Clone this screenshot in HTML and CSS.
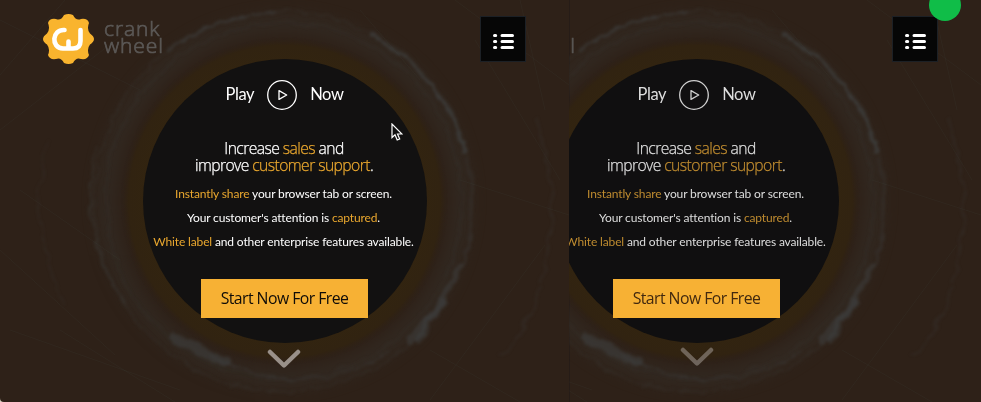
FILE: index.html
```
<!DOCTYPE html>
<html lang="en">
<head>
<meta charset="utf-8">
<title>CrankWheel</title>
<link rel="stylesheet" href="styles.css">
</head>
<body>
<svg class="defs" aria-hidden="true">
  <defs>
    <filter id="chalk" x="-20%" y="-20%" width="140%" height="140%" color-interpolation-filters="sRGB">
      <feTurbulence type="fractalNoise" baseFrequency="0.06" numOctaves="5" seed="11" result="n"/>
      <feDisplacementMap in="SourceGraphic" in2="n" scale="10" xChannelSelector="R" yChannelSelector="G" result="d"/>
      <feGaussianBlur in="d" stdDeviation="1.5"/>
    </filter>
    <filter id="soft" x="-20%" y="-20%" width="140%" height="140%" color-interpolation-filters="sRGB"><feGaussianBlur stdDeviation="7"/></filter>
    <radialGradient id="halo">
      <stop offset="0.84" stop-color="#322410"/>
      <stop offset="0.95" stop-color="#312311"/>
      <stop offset="1" stop-color="#2e2118" stop-opacity="0"/>
    </radialGradient>
    <symbol id="backdrop" viewBox="0 0 569 402">
      <circle cx="284" cy="201" r="178" fill="none" stroke="#332b24" stroke-width="20" opacity=".7" filter="url(#soft)"/>
      <g filter="url(#chalk)" fill="none" stroke="#43484a" stroke-linecap="round">
        <circle cx="284" cy="201" r="190" stroke-width="1.500" opacity=".22"/>
        <circle cx="284" cy="201" r="178" stroke-width="2" opacity=".12"/>
        <path d="M168 52A190 190 0 0 1 275 12" stroke-width="2.500" opacity=".45"/>
        <path d="M370 35A188 188 0 0 1 466 152" stroke-width="3" opacity=".6"/>
        <path d="M466 158A187 187 0 0 1 462 266" stroke-width="3" opacity=".2"/>
        <path d="M459 266A190 190 0 0 1 408 341" stroke-width="6" opacity=".4"/>
        <path d="M443 303L418 338" stroke-width="6" opacity=".35"/>
        <path d="M174 336A178 178 0 0 0 226 361" stroke-width="9" opacity=".45"/>
        <path d="M211 355A165 165 0 0 0 390 350" stroke-width="1.500" opacity=".35"/>
        <path d="M96 147A191 191 0 0 0 124 302" stroke-width="2" opacity=".3"/>
        <path d="M536 120Q565 200 541 280M541 285Q530 330 500 355" stroke-width="2" opacity=".2"/>
        <path d="M46 140Q27 230 64 303" stroke-width="1.500" opacity=".2"/>
      </g>
      <g stroke="#444746" stroke-width=".6" opacity=".25">
        <path d="M0 75L65 0M0 130L135 25M10 330L180 390M0 250L115 355M455 0L569 85M475 40L560 180M460 180L569 215M430 350L520 402M360 10L420 80M520 0L545 110M60 330L175 402M20 190L120 260M430 400L545 245M0 20L140 90" fill="none"/>
      </g>
      <circle cx="284.5" cy="201" r="164" fill="url(#halo)"/>
    </symbol>
    <symbol id="gear" viewBox="0 0 51 50">
      <path fill="#f9b42e" d="M21 1Q25.500-1 30 1Q33 7 38 5Q44.500 4 46 9Q43.500 15 47 19.500Q55 25 47 30.500Q43.500 35 46 41Q44.500 46 38 45Q33 43 30 49Q25.500 51 21 49Q18 43 13 45Q6.500 46 5 41Q7.500 35 4 30.500Q-4 25 4 19.500Q7.500 15 5 9Q6.500 4 13 5Q18 7 21 1Z"/>
      <path fill="none" stroke="#fff" stroke-width="4.600" stroke-linecap="round" stroke-linejoin="round" d="M21.500 16C9 15 7.500 34 20 34.500H30Q37.500 34.500 37.500 27V16M25.500 27.500V34"/>
    </symbol>
    <symbol id="list" viewBox="0 0 21 15">
      <path stroke="#fff" stroke-width="3" stroke-linecap="round" d="M1.500 1.500h1.200M9 1.500h10.500M1.500 7.500h1.200M9 7.500h10.500M1.500 13.500h1.200M9 13.500h10.500"/>
    </symbol>
    <symbol id="play" viewBox="0 0 30 30">
      <circle cx="15" cy="15" r="14.300" fill="none" stroke="#fff" stroke-width="1.300"/>
      <path d="M12 10.600V19.400L19.700 15Z" fill="none" stroke="#fff" stroke-width="1.300" stroke-linejoin="round"/>
    </symbol>
    <symbol id="chevron" viewBox="0 0 34 20">
      <path d="M3 3L17 16.500L31 3" fill="none" stroke="#999089" stroke-width="4.500" stroke-linecap="round" stroke-linejoin="round"/>
    </symbol>
  </defs>
</svg>
<main class="screens">
  <section class="screen presenter">
    <div class="page">
      <svg class="backdrop"><use href="#backdrop"/></svg>
      <header class="top">
        <div class="brand"><svg class="gear"><use href="#gear"/></svg><div class="name">crank<br>wheel</div></div>
        <div class="menu"><svg class="list"><use href="#list"/></svg></div>
      </header>
      <div class="disc">
        <div class="play-row"><span class="play-word">Play</span><svg class="play"><use href="#play"/></svg><span class="play-word">Now</span></div>
        <h1 class="headline"><span>Increase <em>sales</em> and</span><span>improve <em>customer support</em>.</span></h1>
        <div class="points">
          <p><em>Instantly share</em> your browser tab or screen.</p>
          <p>Your customer's attention is <em>captured</em>.</p>
          <p><em>White label</em> and other enterprise features available.</p>
        </div>
        <div class="cta"><span>Start Now For Free</span></div>
      </div>
      <svg class="chevron"><use href="#chevron"/></svg>
      <svg class="pointer" viewBox="0 0 12 19"><path d="M1 1V14.500L4 11.700L6.200 17L8.700 16L6.500 11H11Z" fill="#111" stroke="#fff" stroke-width="1.200"/></svg>
    </div>
  </section>
  <section class="screen viewer">
    <div class="page">
      <svg class="backdrop"><use href="#backdrop"/></svg>
      <header class="top">
        <div class="brand"><svg class="gear"><use href="#gear"/></svg><div class="name"><br>wheel</div></div>
        <div class="menu"><svg class="list"><use href="#list"/></svg></div>
      </header>
      <div class="disc">
        <div class="play-row"><span class="play-word">Play</span><svg class="play"><use href="#play"/></svg><span class="play-word">Now</span></div>
        <h1 class="headline"><span>Increase <em>sales</em> and</span><span>improve <em>customer support</em>.</span></h1>
        <div class="points">
          <p><em>Instantly share</em> your browser tab or screen.</p>
          <p>Your customer's attention is <em>captured</em>.</p>
          <p><em>White label</em> and other enterprise features available.</p>
        </div>
        <div class="cta"><span>Start Now For Free</span></div>
      </div>
      <svg class="chevron"><use href="#chevron"/></svg>
    </div>
    <div class="status"></div>
  </section>
</main>
</body>
</html>
```
FILE: styles.css
```
* { box-sizing: border-box; }
body { margin: 0; background: #d8d0c0; overflow: hidden; font-family: Lato, sans-serif; }
.defs { position: absolute; width: 0; height: 0; }
svg { display: block; flex: none; }
em { font-style: normal; color: #e9a72e; }
.screens { display: flex; width: 981px; height: 402px; border-radius: 0 0 0 4px; overflow: hidden; }
.screen { position: relative; height: 402px; overflow: hidden; background: #2e2118; }
.presenter { width: 569px; }
.viewer { width: 412px; display: flex; justify-content: flex-end; box-shadow: inset 1px 0 #261c17; }
.page { position: relative; width: 569px; height: 402px; flex: none; display: flex; flex-direction: column; align-items: center; }
.backdrop { position: absolute; left: 0; top: 0; width: 569px; height: 402px; }
.top { position: relative; z-index: 1; width: 100%; height: 59px; padding: 14px 44px 0 43px; display: flex; justify-content: space-between; align-items: flex-start; }
.brand { display: flex; gap: 10px; }
.gear { width: 51px; height: 50px; }
.name { margin-top: 6px; font: 300 21px/17px "Open Sans", sans-serif; letter-spacing: .9px; color: #5b5856; -webkit-text-stroke: .7px #5b5856; }
.menu { width: 46px; height: 46px; margin: 2px -1px 0 0; background: #060606; border: 1px solid #1c2025; display: flex; align-items: center; justify-content: center; padding-top: 4px; }
.list { width: 21px; height: 15px; }
.disc { position: relative; width: 284px; height: 284px; border-radius: 50%; background: #121111; color: #fff; display: flex; flex-direction: column; align-items: center; padding-top: 21px; }
.play-row { display: flex; align-items: center; justify-content: center; gap: 13px; height: 30px; font-size: 16.5px; letter-spacing: -.4px; line-height: 20px; }
.play-word { margin-top: -3px; }
.play { width: 30px; height: 30px; }
.headline { margin: 30px 1px 0 0; font: 300 15.7px/16.5px "Open Sans", sans-serif; display: flex; flex-direction: column; align-items: center; white-space: nowrap; letter-spacing: -.58px; -webkit-text-stroke: .25px currentColor; }
.headline em { -webkit-text-stroke: .25px currentColor; }
.points { margin: 9px 2px 0 0; font-size: 12px; line-height: 24px; white-space: nowrap; text-align: center; }
.points p { margin: 0; letter-spacing: -.14px; }
.cta { margin-top: 25px; width: 167px; height: 39px; background: #f7b134; color: #100c08; display: flex; align-items: center; justify-content: center; font: 400 15.8px/20px "Open Sans", sans-serif; letter-spacing: -.55px; white-space: nowrap; padding-bottom: 1px; }
.chevron { position: relative; width: 34px; height: 20px; margin-top: 6px; }
.presenter .chevron { margin-right: 1px; }
.pointer { position: absolute; left: 390.5px; top: 122.5px; width: 12px; height: 19px; }
.viewer .disc { color: #ddd; background: #100f10; }
.viewer em { color: #bd8a2f; }
.viewer .cta { color: #42290f; }
.viewer .play { opacity: .8; }
.viewer .chevron { opacity: .6; margin-top: 4px; }
.status { position: absolute; right: 20px; top: -11px; width: 32px; height: 32px; border-radius: 50%; background: #10bd48; z-index: 2; }
```
